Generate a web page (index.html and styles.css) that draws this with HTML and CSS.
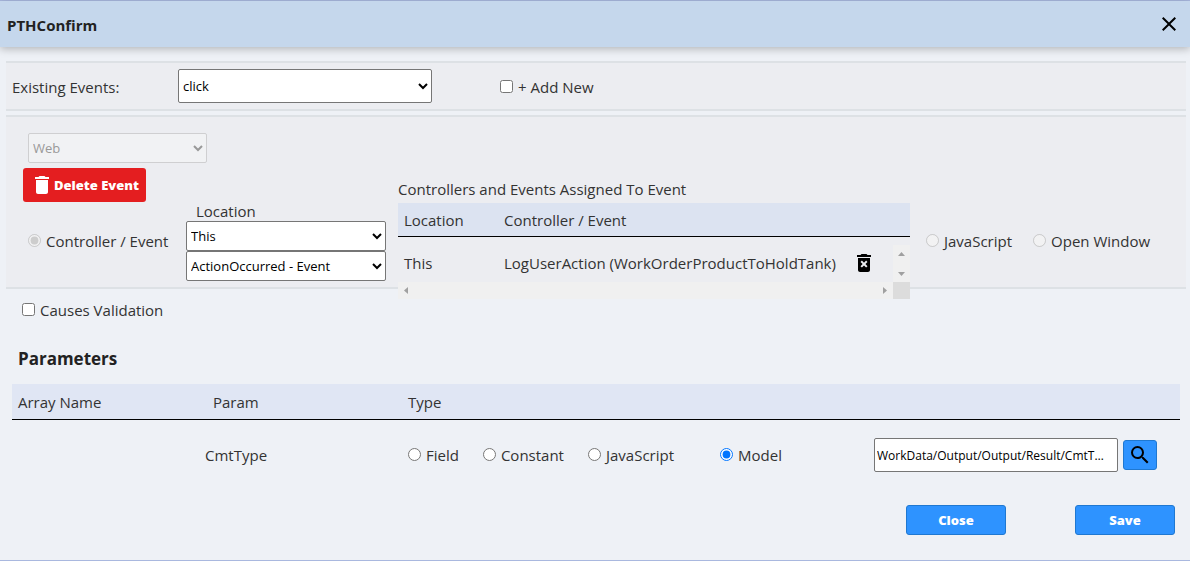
FILE: index.html
```html
<!DOCTYPE html>
<html lang="en">
<head>
<meta charset="utf-8">
<title>PTHConfirm</title>
<link rel="stylesheet" href="styles.css">
</head>
<body>
<div class="dialog">
  <header class="dialog-header">
    <h1 class="dialog-title">PTHConfirm</h1>
    <button class="icon-button" type="button" aria-label="Close dialog">
      <svg width="24" height="24" viewBox="0 0 24 24"><path d="M19 6.41L17.59 5 12 10.59 6.41 5 5 6.41 10.59 12 5 17.59 6.41 19 12 13.41 17.59 19 19 17.59 13.41 12z"/></svg>
    </button>
  </header>

  <main class="dialog-body">
    <section class="panel existing">
      <label class="existing-label" for="existing-events">Existing Events:</label>
      <select class="field existing-select" id="existing-events"><option>click</option></select>
      <label class="choice add-new"><input type="checkbox">+ Add New</label>
    </section>

    <section class="panel event">
      <div class="event-type">
        <select class="field platform" aria-label="Platform" disabled><option>Web</option></select>
        <button class="button danger" type="button">
          <svg width="24" height="24" viewBox="0 0 24 24"><path d="M6 19c0 1.100.9 2 2 2h8c1.100 0 2-.9 2-2V7H6v12zM19 4h-3.500l-1-1h-5l-1 1H5v2h14V4z"/></svg>
          Delete Event
        </button>
        <label class="choice controller-choice"><input type="radio" name="action" checked disabled>Controller / Event</label>
      </div>

      <div class="location">
        <label class="location-label" for="location">Location</label>
        <select class="field" id="location"><option>This</option></select>
        <select class="field" aria-label="Event"><option>ActionOccurred - Event</option></select>
      </div>

      <div class="assigned">
        <h2 class="assigned-title" id="assigned-title">Controllers and Events Assigned To Event</h2>
        <div class="assigned-view">
          <table class="assigned-table" aria-labelledby="assigned-title">
            <thead><tr><th class="col-location">Location</th><th>Controller / Event</th><th class="col-remove"></th></tr></thead>
            <tbody><tr>
              <td>This</td>
              <td>LogUserAction (WorkOrderProductToHoldTank)</td>
              <td><button class="icon-button" type="button" aria-label="Remove">
                <svg width="24" height="24" viewBox="0 0 24 24"><path fill-rule="evenodd" d="M6 19c0 1.100.9 2 2 2h8c1.100 0 2-.9 2-2V7H6v12zM8.500 11l1.400-1.400L12 11.700l2.100-2.100 1.400 1.400-2.100 2.100 2.100 2.100-1.400 1.400-2.100-2.100-2.100 2.100-1.400-1.400 2.100-2.100zM15.500 4l-1-1h-5l-1 1H5v2h14V4z"/></svg>
              </button></td>
            </tr></tbody>
          </table>
          <div class="scroll-v">
            <svg width="17" height="17" viewBox="0 0 17 17"><path d="M5 11h7L8.500 7z"/></svg>
            <svg width="17" height="17" viewBox="0 0 17 17"><path d="M5 7h7l-3.500 4z"/></svg>
          </div>
          <div class="scroll-h">
            <svg width="17" height="17" viewBox="0 0 17 17"><path d="M10 5v7L6 8.500z"/></svg>
            <svg width="17" height="17" viewBox="0 0 17 17"><path d="M7 5v7l4-3.500z"/></svg>
            <span class="scroll-corner"></span>
          </div>
        </div>
      </div>

      <div class="other-actions">
        <label class="choice"><input type="radio" name="action" disabled>JavaScript</label>
        <label class="choice"><input type="radio" name="action" disabled>Open Window</label>
      </div>
    </section>

    <label class="choice validation"><input type="checkbox">Causes Validation</label>

    <section class="params">
      <h2 class="params-title">Parameters</h2>
      <table class="params-table">
        <thead><tr><th class="col-array">Array Name</th><th class="col-param">Param</th><th class="col-type">Type</th><th></th></tr></thead>
        <tbody><tr>
          <td></td>
          <td class="param-name">CmtType</td>
          <td>
            <div class="types">
              <label class="choice"><input type="radio" name="type">Field</label>
              <label class="choice"><input type="radio" name="type">Constant</label>
              <label class="choice"><input type="radio" name="type">JavaScript</label>
              <label class="choice model"><input type="radio" name="type" checked>Model</label>
            </div>
          </td>
          <td>
            <div class="lookup">
              <input class="field lookup-input" type="text" aria-label="Model path" value="WorkData/Output/Output/Result/CmtType">
              <button class="button primary search" type="button" aria-label="Search">
                <svg width="24" height="24" viewBox="0 0 24 24"><path d="M15.500 14h-.79l-.28-.27A6.471 6.471 0 0 0 16 9.500 6.500 6.500 0 1 0 9.500 16c1.610 0 3.090-.59 4.230-1.570l.27.28v.79l5 4.990L20.490 19l-4.990-5zm-6 0C7.010 14 5 11.990 5 9.500S7.010 5 9.500 5 14 7.010 14 9.500 11.990 14 9.500 14z"/></svg>
              </button>
            </div>
          </td>
        </tr></tbody>
      </table>
    </section>

    <footer class="actions">
      <button class="button primary" type="button">Close</button>
      <button class="button primary" type="button">Save</button>
    </footer>
  </main>
</div>
</body>
</html>
```
FILE: styles.css
```css
* { box-sizing: border-box; }

body {
  margin: 0;
  background: #eef1f6;
  color: #333;
  font: 15px/20px "Segoe UI", "Open Sans", "Noto Sans", sans-serif;
}

.dialog {
  display: flex;
  flex-direction: column;
  min-height: 100vh;
  border-top: 1px solid #a9b8df;
  border-bottom: 1px solid #a9b8df;
}

.dialog-header {
  display: flex;
  align-items: center;
  justify-content: space-between;
  min-height: 46px;
  padding: 0 9px 0 7px;
  background: #c5d7ec;
  box-shadow: 0 2px 8px rgba(0, 0, 0, 0.25);
}

.dialog-title {
  margin: 2px 0 0;
  color: #222;
  font-size: 15px;
}

.icon-button {
  display: flex;
  padding: 0;
  border: 0;
  background: none;
  cursor: pointer;
}

.dialog-body {
  display: flex;
  flex-direction: column;
  padding: 14px 4px 24px 6px;
}

.panel {
  border: solid #dde1e5;
  border-width: 2px 0;
  background: #ecedf1;
}

.field {
  height: 30px;
  border: 1px solid #767676;
  border-radius: 2px;
  background-color: #fff;
  color: #000;
  font: 13px "Segoe UI", "Open Sans", "Noto Sans", sans-serif;
}

.field:disabled {
  border-color: #cfcfd1;
  background-color: #f1f2f4;
  color: #999;
  opacity: 1;
}

.choice {
  display: flex;
  align-items: center;
  gap: 5px;
  white-space: nowrap;
}

.choice input {
  flex: none;
  width: 13px;
  height: 13px;
  margin: 0 0 2px;
}

.existing {
  display: flex;
  align-items: center;
  height: 50px;
  padding: 0 6px;
}

.existing-label { width: 166px; padding-top: 2px; }

.add-new { padding-top: 2px; }

.existing-select {
  width: 254px;
  height: 34px;
  margin-right: 68px;
}

.event {
  display: grid;
  grid-template-columns: 163px 200px 512px 1fr;
  height: 174px;
  margin-top: 4px;
  padding: 16px 6px 0 17px;
}

.event-type {
  display: flex;
  flex-direction: column;
  align-items: flex-start;
}

.platform { width: 179px; margin-left: 5px; }

.controller-choice { margin: 29px 0 0 5px; }

.button {
  display: flex;
  align-items: center;
  justify-content: center;
  width: 100px;
  height: 30px;
  padding: 0;
  border: 1px solid #1f78d1;
  border-radius: 3px;
  background: #2e93ff;
  color: #fff;
  font: 800 13px "Segoe UI", "Open Sans", "Noto Sans", sans-serif;
  cursor: pointer;
}

.danger {
  width: 123px;
  height: 34px;
  margin-top: 5px;
  border: 0;
  background: #e41e20;
}

.danger svg { fill: #fff; }

.location {
  display: flex;
  flex-direction: column;
  padding-top: 68px;
}

.location-label { padding-left: 10px; }

.assigned {
  position: relative;
  padding-top: 46px;
  margin: 0 -12px 0 12px;
}

.assigned-title {
  margin: 0;
  font-size: 15px;
  font-weight: 400;
}

.assigned-view {
  display: grid;
  grid-template-columns: 1fr 17px;
  margin-top: 4px;
}

.assigned-table {
  grid-area: 1 / 1 / 2 / 3;
  width: 100%;
  border-spacing: 0;
}

th { font-weight: 400; text-align: left; }

.assigned-table th {
  height: 34px;
  padding: 0 6px;
  border-bottom: 1px solid #000;
  background: #dce3f1;
}

.assigned-table td { height: 45px; padding: 6px 6px 0; }

.assigned-table .col-location { width: 100px; }

.assigned-table .col-remove { width: 64px; }

.scroll-v {
  grid-area: 1 / 2;
  align-self: end;
  display: flex;
  flex-direction: column;
  justify-content: space-between;
  height: 37px;
  background: #f0f0f0;
}

.scroll-v svg, .scroll-h svg { fill: #a0a0a0; }

.scroll-h {
  grid-area: 2 / 1 / 3 / 3;
  display: grid;
  grid-template-columns: 1fr 17px 17px;
  height: 17px;
  background: #f0f0f0;
}

.scroll-corner { background: #dcdcdc; }

.other-actions {
  display: flex;
  gap: 21px;
  align-self: start;
  padding: 98px 0 0 28px;
}

.validation { margin: 11px 0 0 16px; align-self: flex-start; }

.params { padding: 26px 6px 0 6px; }

.params-title {
  margin: 0 0 12px 6px;
  color: #222;
  font-size: 17px;
  line-height: 26px;
}

.params-table {
  width: 100%;
  border-spacing: 0;
  table-layout: fixed;
}

.params-table th {
  height: 36px;
  padding: 0 6px;
  border-bottom: 1px solid #000;
  background: #e0e6f4;
}

.params-table .col-array { width: 193px; }

.params-table .col-param { width: 195px; padding-left: 8px; }

.params-table .col-type { width: 474px; padding-left: 8px; }

.params-table td { height: 70px; padding: 0; }

.params-table .types { display: flex; gap: 24px; padding-left: 8px; }

.model { margin-left: 22px; }

.lookup { display: flex; align-items: center; gap: 5px; }

.lookup-input {
  width: 244px;
  height: 34px;
  padding: 0 8px 0 2px;
  font-size: 12px;
  text-overflow: ellipsis;
}

.search { width: 34px; }

.actions {
  display: flex;
  justify-content: flex-end;
  gap: 69px;
  padding: 15px 11px 0;
}
```
